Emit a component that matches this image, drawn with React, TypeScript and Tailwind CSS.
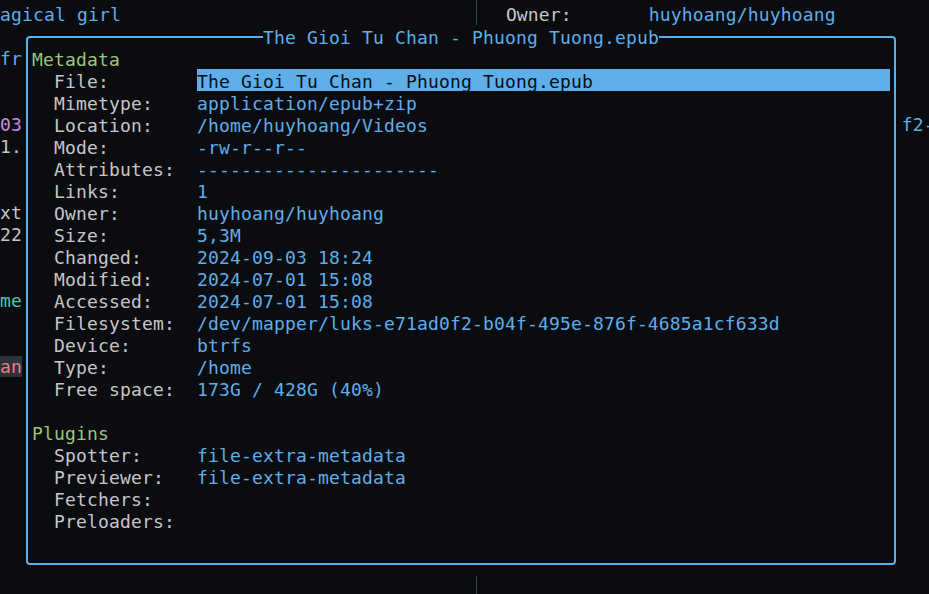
import React from 'react';

// terminal cell: 11px wide, 22px tall
type Seg = { col: number; text: string; cls?: string };

const BLUE = 'text-[#5eaeea]';
const GRAY = 'text-[#c4c6c8]';

function TermRow({ segs }: { segs: Seg[] }) {
  let cursor = 0;
  const out: React.ReactNode[] = [];
  segs.forEach((s, i) => {
    if (s.col > cursor) out.push(' '.repeat(s.col - cursor));
    out.push(
      <span key={i} className={s.cls}>
        {s.text}
      </span>
    );
    cursor = s.col + s.text.length;
  });
  return <div className="h-[22px] leading-[22px] whitespace-pre">{out}</div>;
}

const background: Record<number, Seg[]> = {
  0: [
    { col: 0, text: 'agical girl', cls: BLUE },
    { col: 46, text: 'Owner:', cls: GRAY },
    { col: 59, text: 'huyhoang/huyhoang', cls: BLUE },
  ],
  2: [{ col: 0, text: 'fr', cls: BLUE }],
  5: [
    { col: 0, text: '03', cls: 'text-[#c98de0]' },
    { col: 82, text: 'f2-', cls: BLUE },
  ],
  6: [{ col: 0, text: '1.', cls: GRAY }],
  9: [{ col: 0, text: 'xt', cls: GRAY }],
  10: [{ col: 0, text: '22', cls: GRAY }],
  13: [{ col: 0, text: 'me', cls: 'text-[#52c1ae]' }],
  16: [{ col: 0, text: 'an', cls: 'text-[#f37a85] bg-[#2b333d]' }],
};

const metadata: [string, string][] = [
  ['File:', 'The Gioi Tu Chan - Phuong Tuong.epub'],
  ['Mimetype:', 'application/epub+zip'],
  ['Location:', '/home/huyhoang/Videos'],
  ['Mode:', '-rw-r--r--'],
  ['Attributes:', '----------------------'],
  ['Links:', '1'],
  ['Owner:', 'huyhoang/huyhoang'],
  ['Size:', '5,3M'],
  ['Changed:', '2024-09-03 18:24'],
  ['Modified:', '2024-07-01 15:08'],
  ['Accessed:', '2024-07-01 15:08'],
  ['Filesystem:', '/dev/mapper/luks-e71ad0f2-b04f-495e-876f-4685a1cf633d'],
  ['Device:', 'btrfs'],
  ['Type:', '/home'],
  ['Free space:', '173G / 428G (40%)'],
];

const plugins: [string, string][] = [
  ['Spotter:', 'file-extra-metadata'],
  ['Previewer:', 'file-extra-metadata'],
  ['Fetchers:', ''],
  ['Preloaders:', ''],
];

function Field({ label, value, selected }: { label: string; value: string; selected?: boolean }) {
  return (
    <div className="flex h-[22px] leading-[26px] whitespace-pre">
      <span className={`w-[165px] shrink-0 pl-[22px] ${GRAY}`}>{label}</span>
      <span className={selected ? 'flex-1 bg-[#5eaeea] text-[#0b0c10]' : BLUE}>{value}</span>
    </div>
  );
}

function SectionTitle({ children }: { children: React.ReactNode }) {
  return <div className="h-[22px] leading-[26px] text-[#9bc47c]">{children}</div>;
}

export default function App() {
  const rows = Array.from({ length: 27 }, (_, i) => i);

  return (
    <div className="relative w-[929px] h-[594px] overflow-hidden bg-[#0b0c10] font-['DejaVu_Sans_Mono',monospace] text-[18px] tracking-[0.16px]">
      {/* file manager panes behind the popup */}
      <div className="pt-[4px]">
        {rows.map((r) => (
          <TermRow key={r} segs={background[r] || []} />
        ))}
      </div>

      {/* pane separators */}
      <div className="absolute left-[476px] top-0 h-[25px] w-px bg-[#3b4048]" />
      <div className="absolute left-[476px] top-[576px] h-[18px] w-px bg-[#3b4048]" />

      {/* spot popup */}
      <div className="absolute left-[26px] top-[36px] w-[870px] h-[529px] rounded-[4px] border-2 border-[#5eaeea] bg-[#0b0c10] pl-[4px] pr-[4px] pt-[9px]">
        <div className="absolute left-1/2 -translate-x-1/2 top-[-11px] h-[22px] leading-[22px] whitespace-pre bg-[#0b0c10] text-[#5eaeea]">
          The Gioi Tu Chan - Phuong Tuong.epub
        </div>

        <SectionTitle>Metadata</SectionTitle>
        {metadata.map(([label, value], i) => (
          <Field key={label} label={label} value={value} selected={i === 0} />
        ))}
        <div className="h-[22px]" />
        <SectionTitle>Plugins</SectionTitle>
        {plugins.map(([label, value]) => (
          <Field key={label} label={label} value={value} />
        ))}
      </div>
    </div>
  );
}
